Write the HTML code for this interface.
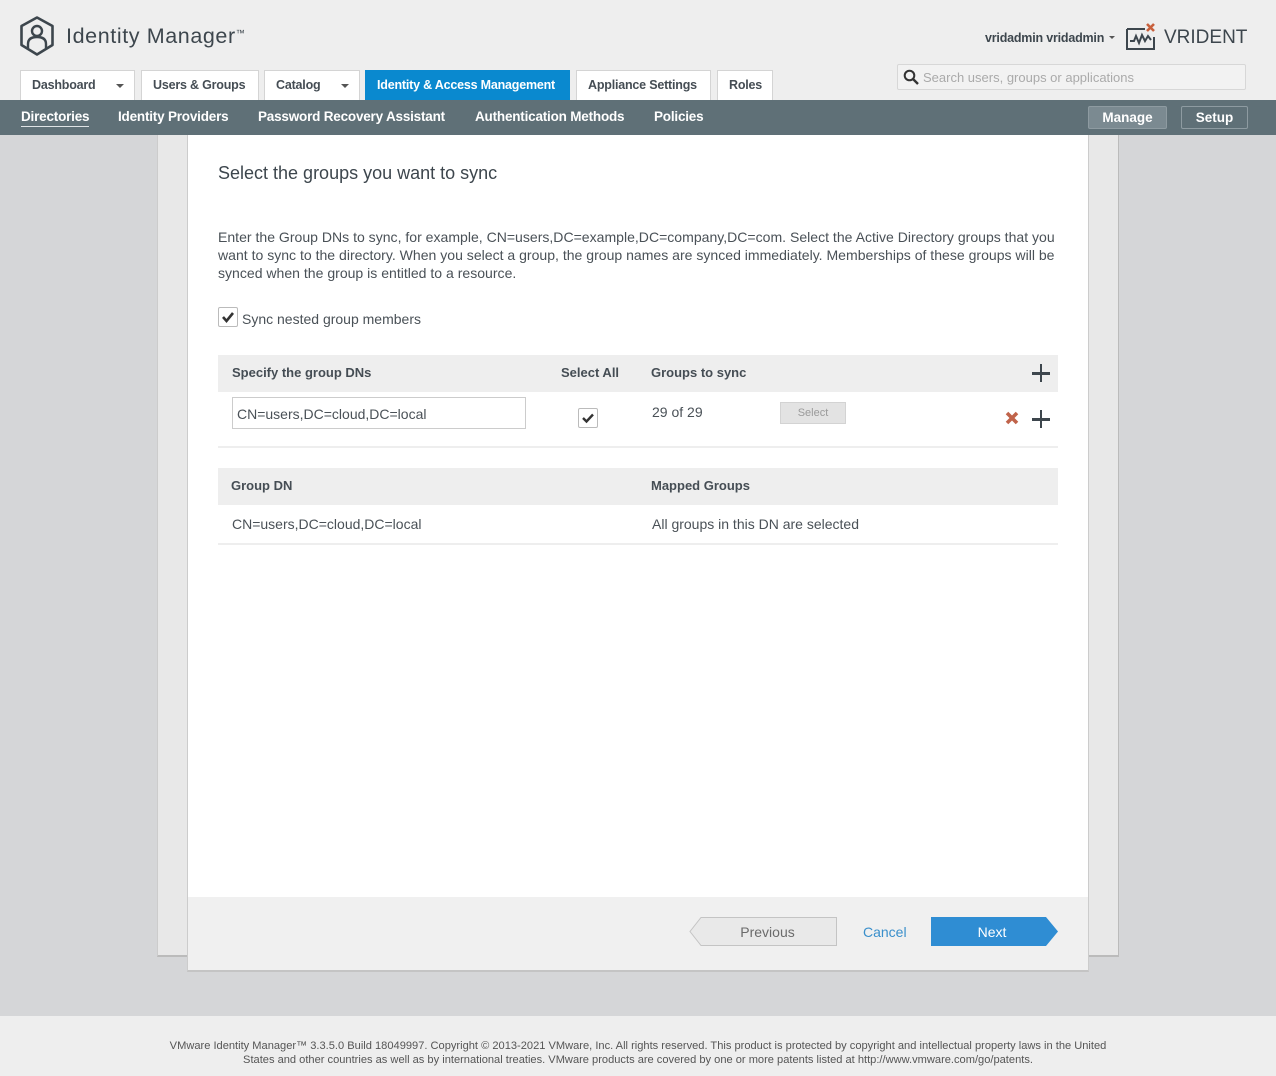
<!DOCTYPE html>
<html><head><style>
*{box-sizing:border-box;margin:0;padding:0}
body{width:1276px;height:1076px;position:relative;background:#d5d6d8;font-family:"Liberation Sans",Arial,sans-serif;color:#333;overflow:hidden}
.a{position:absolute}
.tab{position:absolute;top:70px;height:30px;background:#fff;border:1px solid #d4d4d4;border-bottom:none;font-size:12.5px;color:#454d54;font-weight:bold;padding:7px 0 0 11px;letter-spacing:-.2px;white-space:nowrap}
.caret{position:absolute;top:13px;width:0;height:0;border-left:4px solid transparent;border-right:4px solid transparent;border-top:4px solid #555}
.nav{position:absolute;top:109px;font-size:13.5px;color:#fff;font-weight:bold;letter-spacing:-.2px}
</style></head><body>
<div class="a" style="left:0;top:0;width:1276px;height:100px;background:#eeeeee"></div>
<svg class="a" style="left:18px;top:15px" width="40" height="42" viewBox="0 0 40 42">
<path d="M19 2.5 L34.5 11 L34.5 30 L19 39.5 L3.5 30 L3.5 11 Z" fill="none" stroke="#3d464d" stroke-width="2.6" stroke-linejoin="round"/>
<circle cx="19" cy="16" r="5" fill="none" stroke="#3d464d" stroke-width="2.4"/>
<path d="M10 33 V29 Q10 22 19 22 Q28 22 28 29 V33" fill="none" stroke="#3d464d" stroke-width="2.4"/>
</svg>
<div class="a" style="left:66px;top:24px;font-size:21.5px;color:#3d464d;letter-spacing:.6px">Identity Manager<span style="font-size:9px;vertical-align:top;position:relative;top:4px">™</span></div>
<div class="a" style="left:985px;top:31px;font-size:12.5px;font-weight:bold;color:#3d464d;letter-spacing:-.2px">vridadmin vridadmin</div>
<div class="a" style="left:1109px;top:36px;border-left:3px solid transparent;border-right:3px solid transparent;border-top:3px solid #555"></div>
<svg class="a" style="left:1126px;top:22px" width="32" height="28" viewBox="0 0 32 28">
<path d="M1 7 H19 M1 7 V27 H28 V15" fill="none" stroke="#3d464d" stroke-width="2"/>
<path d="M4 19 L8 19 L10 14 L13 21 L16 13 L19 19 L22 14 L25 18" fill="none" stroke="#3d464d" stroke-width="2"/>
<path d="M21 2 L28 9 M28 2 L21 9" stroke="#c8603c" stroke-width="2.6"/>
</svg>
<div class="a" style="left:1164px;top:27px;font-size:19px;color:#3d464d">VRIDENT</div>
<div class="a" style="left:897px;top:64px;width:349px;height:26px;background:#f2f2f2;border:1px solid #d7d7d7;border-radius:2px"></div>
<svg class="a" style="left:903px;top:69px" width="16" height="16" viewBox="0 0 16 16"><circle cx="6.5" cy="6.5" r="4.8" fill="none" stroke="#333" stroke-width="2"/><path d="M10 10 L15 15" stroke="#333" stroke-width="2.4"/></svg>
<div class="a" style="left:923px;top:70px;font-size:13px;color:#aaa">Search users, groups or applications</div>
<div class="tab" style="left:20px;width:115px">Dashboard<span class="caret" style="left:95px"></span></div>
<div class="tab" style="left:141px;width:118px">Users &amp; Groups</div>
<div class="tab" style="left:264px;width:96px">Catalog<span class="caret" style="left:76px"></span></div>
<div class="tab" style="left:365px;width:205px;background:#0a89cf;border-color:#0a89cf;color:#fff">Identity &amp; Access Management</div>
<div class="tab" style="left:576px;width:135px">Appliance Settings</div>
<div class="tab" style="left:717px;width:56px">Roles</div>
<div class="a" style="left:0;top:100px;width:1276px;height:35px;background:#5f7077"></div>
<div class="nav" style="left:21px;border-bottom:1px solid #dfe3e5;padding-bottom:2px">Directories</div>
<div class="nav" style="left:118px">Identity Providers</div>
<div class="nav" style="left:258px">Password Recovery Assistant</div>
<div class="nav" style="left:475px">Authentication Methods</div>
<div class="nav" style="left:654px">Policies</div>
<div class="a" style="left:1088px;top:106px;width:79px;height:23px;background:#7b8a91;border:1px solid #8e9ba1;border-radius:2px;color:#fff;font-weight:bold;font-size:13.5px;text-align:center;padding-top:3px">Manage</div>
<div class="a" style="left:1181px;top:106px;width:67px;height:23px;border:1px solid #8e9ba1;border-radius:2px;color:#fff;font-weight:bold;font-size:13.5px;text-align:center;padding-top:3px">Setup</div>
<div class="a" style="left:157px;top:135px;width:962px;height:822px;background:#e8e8e8;border-left:1px solid #ccc;border-right:1px solid #bbb;border-bottom:2px solid #bbb"></div>
<div class="a" style="left:187px;top:135px;width:902px;height:837px;background:#fff;border-left:1px solid #ccc;border-right:1px solid #ccc;border-bottom:2px solid #c4c4c4"></div>
<div class="a" style="left:188px;top:897px;width:900px;height:73px;background:#f0f0f0"></div>
<div class="a" style="left:218px;top:163px;font-size:18px;color:#3d464d">Select the groups you want to sync</div>
<div class="a" style="left:218px;top:228px;width:845px;font-size:14.05px;line-height:18px;color:#4a5157">Enter the Group DNs to sync, for example, CN=users,DC=example,DC=company,DC=com. Select the Active Directory groups that you want to sync to the directory. When you select a group, the group names are synced immediately. Memberships of these groups will be synced when the group is entitled to a resource.</div>
<div class="a" style="left:218px;top:307px;width:20px;height:20px;border:1px solid #bbb;border-radius:2px;background:#fff"></div>
<svg class="a" style="left:221px;top:310px" width="14" height="14"><path d="M2 7 L5.5 11 L12 3" fill="none" stroke="#333" stroke-width="2.6"/></svg>
<div class="a" style="left:242px;top:311px;font-size:14px;color:#4a5157">Sync nested group members</div>
<div class="a" style="left:218px;top:355px;width:840px;height:37px;background:#eeeeee"></div>
<div class="a" style="left:232px;top:365px;font-size:13px;font-weight:bold;color:#454d54">Specify the group DNs</div>
<div class="a" style="left:561px;top:365px;font-size:13px;font-weight:bold;color:#454d54">Select All</div>
<div class="a" style="left:651px;top:365px;font-size:13px;font-weight:bold;color:#454d54">Groups to sync</div>
<div class="a" style="left:1032px;top:372px;width:18px;height:2.5px;background:#3d464d"></div>
<div class="a" style="left:1039.8px;top:364px;width:2.5px;height:18px;background:#3d464d"></div>
<div class="a" style="left:232px;top:397px;width:294px;height:32px;border:1px solid #ccc;font-size:14px;color:#4a5157;padding:8px 0 0 4px">CN=users,DC=cloud,DC=local</div>
<div class="a" style="left:578px;top:408px;width:20px;height:20px;border:1px solid #bbb;border-radius:2px"></div>
<svg class="a" style="left:581px;top:411px" width="14" height="14"><path d="M2 7 L5.5 10.5 L12 3.5" fill="none" stroke="#333" stroke-width="2.4"/></svg>
<div class="a" style="left:652px;top:404px;font-size:14px;color:#4a5157">29 of 29</div>
<div class="a" style="left:780px;top:402px;width:66px;height:22px;background:#e3e3e3;border:1px solid #d3d3d3;font-size:11px;color:#9a9a9a;text-align:center;padding-top:4px">Select</div>
<svg class="a" style="left:1005px;top:411px" width="14" height="14"><path d="M2 2 L12 12 M12 2 L2 12" stroke="#c0634a" stroke-width="3.6"/></svg>
<div class="a" style="left:1032px;top:418px;width:18px;height:2.5px;background:#3d464d"></div>
<div class="a" style="left:1039.8px;top:410px;width:2.5px;height:18px;background:#3d464d"></div>
<div class="a" style="left:218px;top:446px;width:840px;height:2px;background:#eeeeee"></div>
<div class="a" style="left:218px;top:468px;width:840px;height:37px;background:#eeeeee"></div>
<div class="a" style="left:231px;top:478px;font-size:13px;font-weight:bold;color:#454d54">Group DN</div>
<div class="a" style="left:651px;top:478px;font-size:13px;font-weight:bold;color:#454d54">Mapped Groups</div>
<div class="a" style="left:232px;top:516px;font-size:14px;color:#4a5157">CN=users,DC=cloud,DC=local</div>
<div class="a" style="left:652px;top:516px;font-size:14px;color:#4a5157">All groups in this DN are selected</div>
<div class="a" style="left:218px;top:543px;width:840px;height:2px;background:#eeeeee"></div>
<svg class="a" style="left:689px;top:917px" width="150" height="30"><path d="M12 0.5 H147.5 V28.5 H12 L1 14.5 Z" fill="#e9e9e9" stroke="#c4c4c4"/></svg>
<div class="a" style="left:700px;top:924px;width:135px;text-align:center;font-size:14px;color:#6b6b6b">Previous</div>
<div class="a" style="left:863px;top:924px;font-size:14px;color:#3a8fcb">Cancel</div>
<svg class="a" style="left:931px;top:917px" width="128" height="30"><path d="M0 0 H115 L127 14.5 L115 29 H0 Z" fill="#2f8dd3"/></svg>
<div class="a" style="left:931px;top:924px;width:122px;text-align:center;font-size:14px;color:#fff">Next</div>
<div class="a" style="left:0;top:1016px;width:1276px;height:60px;background:#eeeeee"></div>
<div class="a" style="left:168px;top:1039px;width:940px;text-align:center;font-size:11.1px;line-height:14px;color:#555">VMware Identity Manager™ 3.3.5.0 Build 18049997. Copyright © 2013-2021 VMware, Inc. All rights reserved. This product is protected by copyright and intellectual property laws in the United States and other countries as well as by international treaties. VMware products are covered by one or more patents listed at http://www.vmware.com/go/patents.</div>
</body></html>
